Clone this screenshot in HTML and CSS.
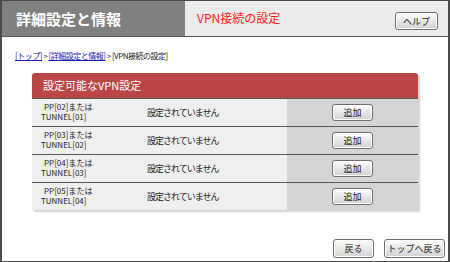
FILE: index.html
```html
<!DOCTYPE html>
<html lang="ja">
<head>
    <meta charset="UTF-8">
    <title>VPN接続の設定</title>
    <link rel="stylesheet" href="styles.css">
</head>
<body>

    <div class="frame">
        <div class="header">
            <div class="header-title">詳細設定と情報</div>
            <div class="header-page">
                <span class="page-name">VPN接続の設定</span>
                <button class="btn btn-help">ヘルプ</button>
            </div>
        </div>

        <div class="breadcrumb">
            <a href="#">[トップ]</a> &gt; <a href="#">[詳細設定と情報]</a> &gt; [VPN接続の設定]
        </div>

        <div class="panel">
            <div class="panel-head">設定可能なVPN設定</div>
            <div class="row">
                <div class="cell-name"><span class="indent">PP[02]または</span><br>TUNNEL[01]</div>
                <div class="cell-status">設定されていません</div>
                <div class="cell-action"><button class="btn btn-add">追加</button></div>
            </div>
            <div class="row">
                <div class="cell-name"><span class="indent">PP[03]または</span><br>TUNNEL[02]</div>
                <div class="cell-status">設定されていません</div>
                <div class="cell-action"><button class="btn btn-add">追加</button></div>
            </div>
            <div class="row">
                <div class="cell-name"><span class="indent">PP[04]または</span><br>TUNNEL[03]</div>
                <div class="cell-status">設定されていません</div>
                <div class="cell-action"><button class="btn btn-add">追加</button></div>
            </div>
            <div class="row">
                <div class="cell-name"><span class="indent">PP[05]または</span><br>TUNNEL[04]</div>
                <div class="cell-status">設定されていません</div>
                <div class="cell-action"><button class="btn btn-add">追加</button></div>
            </div>
        </div>

        <div class="footer">
            <button class="btn btn-back">戻る</button>
            <button class="btn btn-top">トップへ戻る</button>
        </div>
    </div>

</body>
</html>
```

FILE: styles.css
```css
body {
    margin: 0;
    padding: 0;
    background-color: #fff;
    font-family: "Noto Sans CJK JP", "DejaVu Sans", sans-serif;
    color: #222;
}

.frame {
    width: 450px;
    height: 262px;
    box-sizing: border-box;
    border: 1px solid #4a4a4a;
    border-left-width: 2px;
    border-right-width: 2px;
    overflow: hidden;
}

/* en-tête */
.header {
    display: flex;
    height: 35px;
    border-bottom: 1px solid #555;
}

.header-title {
    width: 183px;
    background-color: #808080;
    color: #fff;
    font-size: 15px;
    font-weight: bold;
    line-height: 35px;
    padding-left: 14px;
    box-sizing: border-box;
}

.header-page {
    flex: 1;
    display: flex;
    align-items: center;
    justify-content: space-between;
    background-color: #ececec;
    padding: 0 10px 0 12px;
}

.page-name {
    color: #ff1a1a;
    font-size: 12px;
    margin-top: -2px;
}

/* boutons */
.btn {
    font-family: inherit;
    font-size: 9px;
    color: #222;
    padding: 0;
    background: linear-gradient(#fefefe, #e6e6e6 55%, #d2d2d2);
    border: 1px solid #707070;
    border-radius: 3px;
    box-shadow: inset 0 0 0 1px #fff;
    cursor: pointer;
}

.btn-help {
    width: 43px;
    height: 18px;
    margin-top: 5px;
}

.btn-add {
    width: 41px;
    height: 17px;
}

.btn-back {
    width: 41px;
    height: 19px;
}

.btn-top {
    width: 61px;
    height: 19px;
}

/* fil d'ariane */
.breadcrumb {
    margin: 13px 0 0 13px;
    height: 12px;
    line-height: 12px;
    font-size: 8px;
    letter-spacing: -0.5px;
    color: #222;
}

.breadcrumb a {
    color: #1a1aaa;
}

/* tableau */
.panel {
    width: 386px;
    margin: 11px 0 0 30px;
    border-radius: 3px 3px 0 0;
    box-shadow: 2px 2px 2px rgba(0, 0, 0, 0.18);
    background-color: #efefef;
}

.panel-head {
    height: 25px;
    line-height: 24px;
    background-color: #bb4646;
    color: #fff;
    font-size: 11px;
    padding-left: 11px;
    border-radius: 3px 3px 0 0;
}

.row {
    display: flex;
    height: 27px;
    border-top: 1px solid #555;
}

.row:first-of-type {
    border-top: none;
}

.cell-name {
    width: 108px;
    padding: 3px 0 0 9px;
    box-sizing: border-box;
    font-size: 8px;
    line-height: 10px;
}

.cell-name .indent {
    padding-left: 3px;
}

.cell-status {
    width: 147px;
    padding-left: 7px;
    box-sizing: border-box;
    font-size: 9px;
    letter-spacing: -1px;
    line-height: 27px;
}

.cell-action {
    flex: 1;
    display: flex;
    align-items: center;
    justify-content: center;
    background-color: #d5d5d5;
}

/* pied */
.footer {
    display: flex;
    justify-content: flex-end;
    gap: 10px;
    margin-top: 29px;
    padding-right: 3px;
}
```
